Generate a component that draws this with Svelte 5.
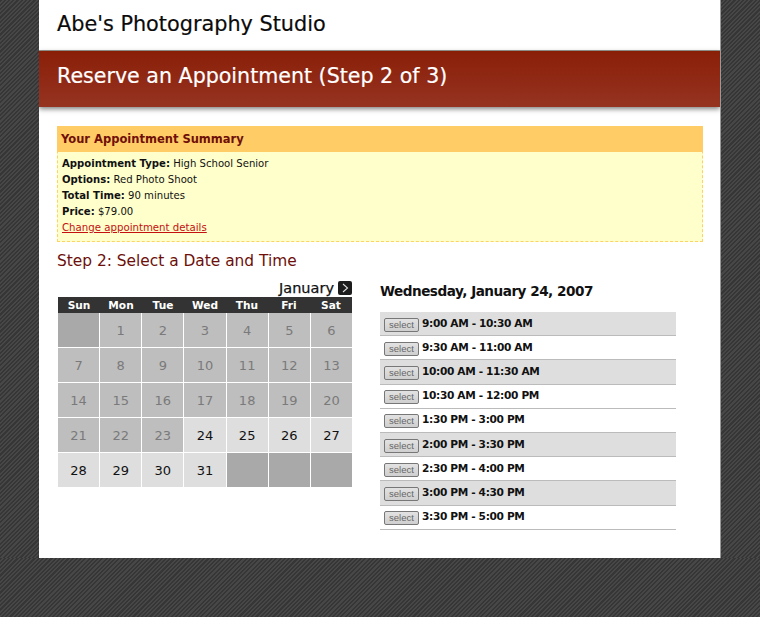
<script>
  const days = [];
  for (let d = 0; d < 35; d++) {
    const n = d >= 1 && d <= 31 ? d : null;
    days.push({ n, cls: n === null ? 'empty' : n < 24 ? 'past' : 'open' });
  }
  const weekdays = ['Sun', 'Mon', 'Tue', 'Wed', 'Thu', 'Fri', 'Sat'];
  // shaded rows do not simply alternate, the list breaks at lunch
  const times = [
    { t: '9:00 AM - 10:30 AM', alt: true },
    { t: '9:30 AM - 11:00 AM', alt: false },
    { t: '10:00 AM - 11:30 AM', alt: true },
    { t: '10:30 AM - 12:00 PM', alt: false },
    { t: '1:30 PM - 3:00 PM', alt: false },
    { t: '2:00 PM - 3:30 PM', alt: true },
    { t: '2:30 PM - 4:00 PM', alt: false },
    { t: '3:00 PM - 4:30 PM', alt: true },
    { t: '3:30 PM - 5:00 PM', alt: false }
  ];
</script>

<div class="page">
  <header class="brand"><h1>Abe's Photography Studio</h1></header>
  <div class="banner"><h2>Reserve an Appointment (Step 2 of 3)</h2></div>

  <main class="content">
    <section class="summary">
      <h3>Your Appointment Summary</h3>
      <div class="details">
        <div><b>Appointment Type:</b> High School Senior</div>
        <div><b>Options:</b> Red Photo Shoot</div>
        <div><b>Total Time:</b> 90 minutes</div>
        <div><b>Price:</b> $79.00</div>
        <div><a href="#change">Change appointment details</a></div>
      </div>
    </section>

    <h4 class="step">Step 2: Select a Date and Time</h4>

    <div class="columns">
      <div class="calendar">
        <div class="month">
          <span>January</span>
          <span class="next">
            <svg width="10" height="10" viewBox="0 0 10 10"><path d="M3 1 L7.5 5 L3 9" fill="none" stroke="#ddd" stroke-width="1.1" /></svg>
          </span>
        </div>
        <div class="weekdays">
          {#each weekdays as w}<span>{w}</span>{/each}
        </div>
        <div class="grid">
          {#each days as day}
            <div class="cell {day.cls}">{day.n ?? ''}</div>
          {/each}
        </div>
      </div>

      <div class="slots">
        <h5>Wednesday, January 24, 2007</h5>
        <ul>
          {#each times as row}
            <li class:alt={row.alt}>
              <button type="button">select</button>
              <span>{row.t}</span>
            </li>
          {/each}
        </ul>
      </div>
    </div>
  </main>
</div>

<style>
  :global(body) {
    margin: 0;
    background-color: #3b3b3b;
    background-image: repeating-linear-gradient(135deg, #363636 0 1.5px, #474747 1.5px 3px);
    font-family: "DejaVu Sans", "Liberation Sans", sans-serif;
  }
  .page {
    width: 681px;
    height: 558px;
    margin-left: 39px;
    background: #fff;
    overflow: hidden;
    box-shadow: 1px 0 0 #999;
  }
  h1, h2, h3, h4, h5 { margin: 0; font-weight: normal; }
  .brand {
    height: 51px;
    box-sizing: border-box;
    padding: 11px 0 0 18px;
    border-bottom: 1px solid #9a9a94;
  }
  h1 {
    font-size: 20.8px;
    line-height: 27px;
    color: #0b0b0b;
    -webkit-text-stroke: 0.2px #0b0b0b;
  }
  .banner {
    height: 56px;
    box-sizing: border-box;
    padding: 11px 0 0 18px;
    background: linear-gradient(#8a1f08, #953321);
    box-shadow: 0 2px 5px rgba(0, 0, 0, 0.5);
    position: relative;
  }
  h2 {
    font-size: 20.6px;
    line-height: 29px;
    color: #fff;
    -webkit-text-stroke: 0.2px #fff;
  }
  .content { padding: 19px 17px 0 18px; }
  .summary {
    background: #ffffcc;
    border: 1px dashed #fbd463;
    border-top: none;
  }
  h3 {
    margin: 0 -1px;
    height: 26px;
    line-height: 26px;
    padding-left: 4px;
    background: #ffcc66;
    color: #700f08;
    font-size: 11.5px;
    font-weight: bold;
  }
  .details {
    padding: 4px 0 5px 4px;
    font-size: 10.1px;
    line-height: 16px;
    color: #111;
  }
  .details a { color: #c41010; font-size: 10.2px; }
  .step {
    margin-top: 9px;
    font-size: 15.4px;
    line-height: 20px;
    color: #6d0f0a;
  }
  .columns {
    display: flex;
    margin-top: 8px;
  }
  .calendar { width: 294px; margin-left: 1px; }
  .month {
    display: flex;
    justify-content: flex-end;
    align-items: center;
    gap: 4px;
    height: 18px;
    font-size: 14.5px;
    color: #111;
    -webkit-text-stroke: 0.25px #111;
  }
  .next {
    display: flex;
    align-items: center;
    justify-content: center;
    width: 14px;
    height: 14px;
    border-radius: 2px;
    background: #1c1c1c;
  }
  .weekdays {
    display: grid;
    grid-template-columns: repeat(7, 1fr);
    height: 16px;
    background: #333;
    color: #fff;
    font-size: 10.6px;
    font-weight: bold;
    line-height: 16px;
    text-align: center;
  }
  .grid {
    display: grid;
    grid-template-columns: repeat(7, 1fr);
    grid-auto-rows: 34px;
    gap: 1px;
  }
  .cell {
    display: flex;
    align-items: center;
    justify-content: center;
    font-size: 13px;
  }
  .empty { background: #a9a9a9; }
  .past { background: #bebebe; color: #7a7a7a; }
  .open { background: #dedede; color: #111; }
  .slots {
    width: 296px;
    margin-left: 28px;
  }
  h5 {
    font-size: 13.6px;
    font-weight: bold;
    line-height: 20px;
    letter-spacing: -0.5px;
    color: #111;
    margin-top: 2px;
  }
  ul {
    list-style: none;
    margin: 11px 0 0;
    padding: 0;
  }
  li {
    display: flex;
    align-items: center;
    gap: 3px;
    height: 23.2px;
    padding-left: 4px;
    border-bottom: 1px solid #bbb;
    font-size: 10.6px;
    font-weight: bold;
    letter-spacing: -0.35px;
    color: #111;
  }
  li.alt { background: #dedede; }
  li span { position: relative; top: -1px; }
  button {
    width: 35px;
    height: 14px;
    margin-top: 2px;
    padding: 0;
    box-sizing: border-box;
    border: 1px solid #777;
    border-radius: 2px;
    background: linear-gradient(#e2e2e2, #cfcfcf);
    color: #666;
    font-family: "Liberation Sans", sans-serif;
    font-size: 9.5px;
    letter-spacing: 0;
    line-height: 12px;
  }
</style>
